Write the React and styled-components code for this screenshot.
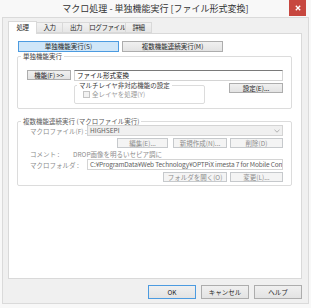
import styled, { createGlobalStyle } from "styled-components";

const Global = createGlobalStyle`
  html, body {
    margin: 0;
    padding: 0;
    background: #ffffff;
  }
  body {
    font-family: "Noto Sans CJK JP", "Noto Sans", sans-serif;
    -webkit-font-smoothing: antialiased;
  }
  * { box-sizing: border-box; }
`;

const Window = styled.div`
  width: 311px;
  height: 308px;
  display: flex;
  flex-direction: column;
  padding: 0 2px 4px 2px;
  background: #f8f8f8;
`;

const TitleBar = styled.div`
  height: 17px;
  display: grid;
  grid-template-columns: 1fr auto 1fr;
  align-items: start;
`;

const Title = styled.div`
  grid-column: 2;
  font-size: 9px;
  line-height: 17px;
  color: #333333;
  white-space: nowrap;
`;

const Close = styled.div`
  grid-column: 3;
  justify-self: end;
  width: 17px;
  height: 16px;
  margin-right: 3px;
  background: #c7473f;
  display: flex;
  align-items: center;
  justify-content: center;
`;

const Client = styled.div`
  flex: 1;
  display: flex;
  flex-direction: column;
  background: #f0f0f0;
  border: 1px solid #dadada;
  padding: 3px 6px 4px 5px;
`;

const TabStrip = styled.div`
  display: flex;
  align-items: flex-end;
  height: 12px;
  padding-left: 1px;
  position: relative;
  z-index: 1;
`;

const Tab = styled.div`
  width: ${(p) => p.$w}px;
  height: ${(p) => (p.$active ? 13 : 11)}px;
  margin-left: -1px;
  margin-bottom: ${(p) => (p.$active ? -1 : 0)}px;
  border: 1px solid #d9d9d9;
  border-bottom: ${(p) => (p.$active ? "none" : "1px solid #d9d9d9")};
  background: ${(p) => (p.$active ? "#ffffff" : "linear-gradient(#f2f2f2, #e6e6e6)")};
  font-size: 6.5px;
  letter-spacing: -0.4px;
  line-height: 1;
  color: #1e1e1e;
  display: flex;
  align-items: center;
  justify-content: center;
  padding-bottom: ${(p) => (p.$active ? 2 : 0)}px;
  white-space: nowrap;
`;

const Panel = styled.div`
  flex: 1;
  background: #ffffff;
  border: 1px solid #d9d9d9;
  display: flex;
  flex-direction: column;
`;

const ModeRow = styled.div`
  display: flex;
  gap: 3px;
  margin: 7px 0 0 9px;
`;

const borderOf = (p) => {
  if (p.$blue || p.$default) return "#4c9be0";
  if (p.$disabled) return "#c6c9cc";
  return "#adadad";
};

const fillOf = (p) => {
  if (p.$blue) return "#cfe6f8";
  if (p.$disabled) return "#f4f4f4";
  return "linear-gradient(#f0f0f0, #e3e3e3)";
};

const Button = styled.div`
  width: ${(p) => p.$w}px;
  height: ${(p) => p.$h || 10}px;
  flex: none;
  margin-right: ${(p) => p.$mr || 0}px;
  margin-top: ${(p) => p.$mt || 0}px;
  border: 1px solid ${borderOf};
  background: ${fillOf};
  color: ${(p) => (p.$disabled ? "#8c8c8c" : "#1e1e1e")};
  font-size: 6.5px;
  line-height: 1;
  display: flex;
  align-items: center;
  justify-content: center;
  white-space: nowrap;
`;

const Group = styled.fieldset`
  margin: ${(p) => p.$mt || 0}px ${(p) => p.$mr ?? 9}px 0 ${(p) => p.$ml ?? 8}px;
  padding: 0;
  min-width: 0;
  width: ${(p) => (p.$w ? `${p.$w}px` : "auto")};
  border: 1px solid #dcdcdc;
  border-radius: 2px;
`;

const Legend = styled.legend`
  margin-left: ${(p) => p.$ml ?? 3}px;
  padding: 0 2px;
  font-size: 6.5px;
  line-height: 8px;
  color: ${(p) => (p.$dim ? "#5a5a5a" : "#3c3c3c")};
  white-space: nowrap;
`;

const SingleBody = styled.div`
  display: grid;
  grid-template-columns: 44px 1fr;
  column-gap: 3px;
  padding: 10px 8px 4px 9px;
`;

const TextBox = styled.div`
  height: ${(p) => p.$h || 11}px;
  border: 1px solid #d4d4d4;
  border-top-color: ${(p) => (p.$disabled ? "#d4d4d4" : "#7a7a7a")};
  background: ${(p) => (p.$gray ? "#f0f0f0" : "#ffffff")};
  font-size: 6.5px;
  line-height: 9px;
  letter-spacing: ${(p) => (p.$tight ? "-0.15px" : "0")};
  padding: 0 2px;
  color: ${(p) => (p.$disabled ? "#5e5e5e" : "#111111")};
  white-space: nowrap;
  overflow: hidden;
  display: flex;
  align-items: center;
  justify-content: space-between;
`;

const SubRow = styled.div`
  grid-column: 2;
  display: flex;
  justify-content: space-between;
  align-items: flex-start;
`;

const CheckRow = styled.div`
  display: flex;
  align-items: center;
  gap: 2px;
  padding: 2px 0 5px 8px;
  font-size: 6.5px;
  line-height: 7px;
  color: #9a9a9a;
`;

const Check = styled.span`
  width: 7px;
  height: 7px;
  border: 1px solid #c4c4c4;
  background: #f2f2f2;
  flex: none;
`;

const MultiBody = styled.div`
  display: flex;
  flex-direction: column;
  padding: 0 8px 3px 12px;
`;

const FieldRow = styled.div`
  display: grid;
  grid-template-columns: ${(p) => p.$label || 57}px 1fr;
  align-items: center;
  margin-top: ${(p) => p.$mt || 0}px;
`;

const Label = styled.span`
  font-size: 6.5px;
  line-height: 8px;
  color: #8c8c8c;
  white-space: nowrap;
`;

const ButtonRow = styled.div`
  display: flex;
  justify-content: flex-end;
  margin-top: ${(p) => p.$mt || 0}px;
`;

const Footer = styled.div`
  display: flex;
  justify-content: flex-end;
  gap: 5px;
  margin-top: 6px;
`;

const tabs = [
  { label: "処理", w: 29, active: true },
  { label: "入力", w: 27 },
  { label: "出力", w: 28 },
  { label: "ログファイル", w: 37 },
  { label: "詳細", w: 27 },
];

const Chevron = () => (
  <svg width="6" height="4" viewBox="0 0 6 4">
    <path d="M0.5 0.8 L3 3.2 L5.5 0.8" fill="none" stroke="#a0a0a0" strokeWidth="0.8" />
  </svg>
);

const App = () => (
  <>
    <Global />
    <Window>
      <TitleBar>
        <Title>マクロ処理 - 単独機能実行 [ファイル形式変換]</Title>
        <Close>
          <svg width="6" height="6" viewBox="0 0 6 6">
            <path d="M0.8 0.8 L5.2 5.2 M5.2 0.8 L0.8 5.2" stroke="#ffffff" strokeWidth="1.3" />
          </svg>
        </Close>
      </TitleBar>
      <Client>
        <TabStrip>
          {tabs.map((t) => (
            <Tab key={t.label} $w={t.w} $active={t.active}>
              {t.label}
            </Tab>
          ))}
        </TabStrip>
        <Panel>
          <ModeRow>
            <Button $w={101} $h={11} $blue>単独機能実行(S)</Button>
            <Button $w={101} $h={11}>複数機能連続実行(M)</Button>
          </ModeRow>

          <Group>
            <Legend>単独機能実行</Legend>
            <SingleBody>
              <Button $w={44}>機能(F) &gt;&gt;</Button>
              <TextBox>ファイル形式変換</TextBox>
              <SubRow>
                <Group $w={131} $ml={0} $mr={0}>
                  <Legend $ml={2}>マルチレイヤ非対応機能の設定</Legend>
                  <CheckRow>
                    <Check />
                    全レイヤを処理(Y)
                  </CheckRow>
                </Group>
                <Button $w={54} $mt={2}>設定(E)...</Button>
              </SubRow>
            </SingleBody>
          </Group>

          <Group $mt={8}>
            <Legend $dim>複数機能連続実行 (マクロファイル実行)</Legend>
            <MultiBody>
              <FieldRow>
                <Label>マクロファイル(F) :</Label>
                <TextBox $gray $disabled>
                  HIGHSEPI
                  <Chevron />
                </TextBox>
              </FieldRow>
              <ButtonRow $mt={2}>
                <Button $w={51} $mr={5} $disabled>編集(E)...</Button>
                <Button $w={54} $mr={3} $disabled>新規作成(N)...</Button>
                <Button $w={53} $disabled>削除(D)</Button>
              </ButtonRow>
              <FieldRow $label={43} $mt={2}>
                <Label>コメント :</Label>
                <Label>DROP画像を明るいセピア調に</Label>
              </FieldRow>
              <FieldRow $mt={1}>
                <Label>マクロフォルダ :</Label>
                <TextBox $disabled $tight>
                  C:¥ProgramData¥Web Technology¥OPTPiX imesta 7 for Mobile Con
                </TextBox>
              </FieldRow>
              <ButtonRow $mt={2}>
                <Button $w={64} $mr={3} $disabled>フォルダを開く(O)</Button>
                <Button $w={53} $disabled>変更(L)...</Button>
              </ButtonRow>
            </MultiBody>
          </Group>
        </Panel>
        <Footer>
          <Button $w={48} $h={14} $default>OK</Button>
          <Button $w={48} $h={14}>キャンセル</Button>
          <Button $w={48} $h={14}>ヘルプ</Button>
        </Footer>
      </Client>
    </Window>
  </>
);

export default App;
